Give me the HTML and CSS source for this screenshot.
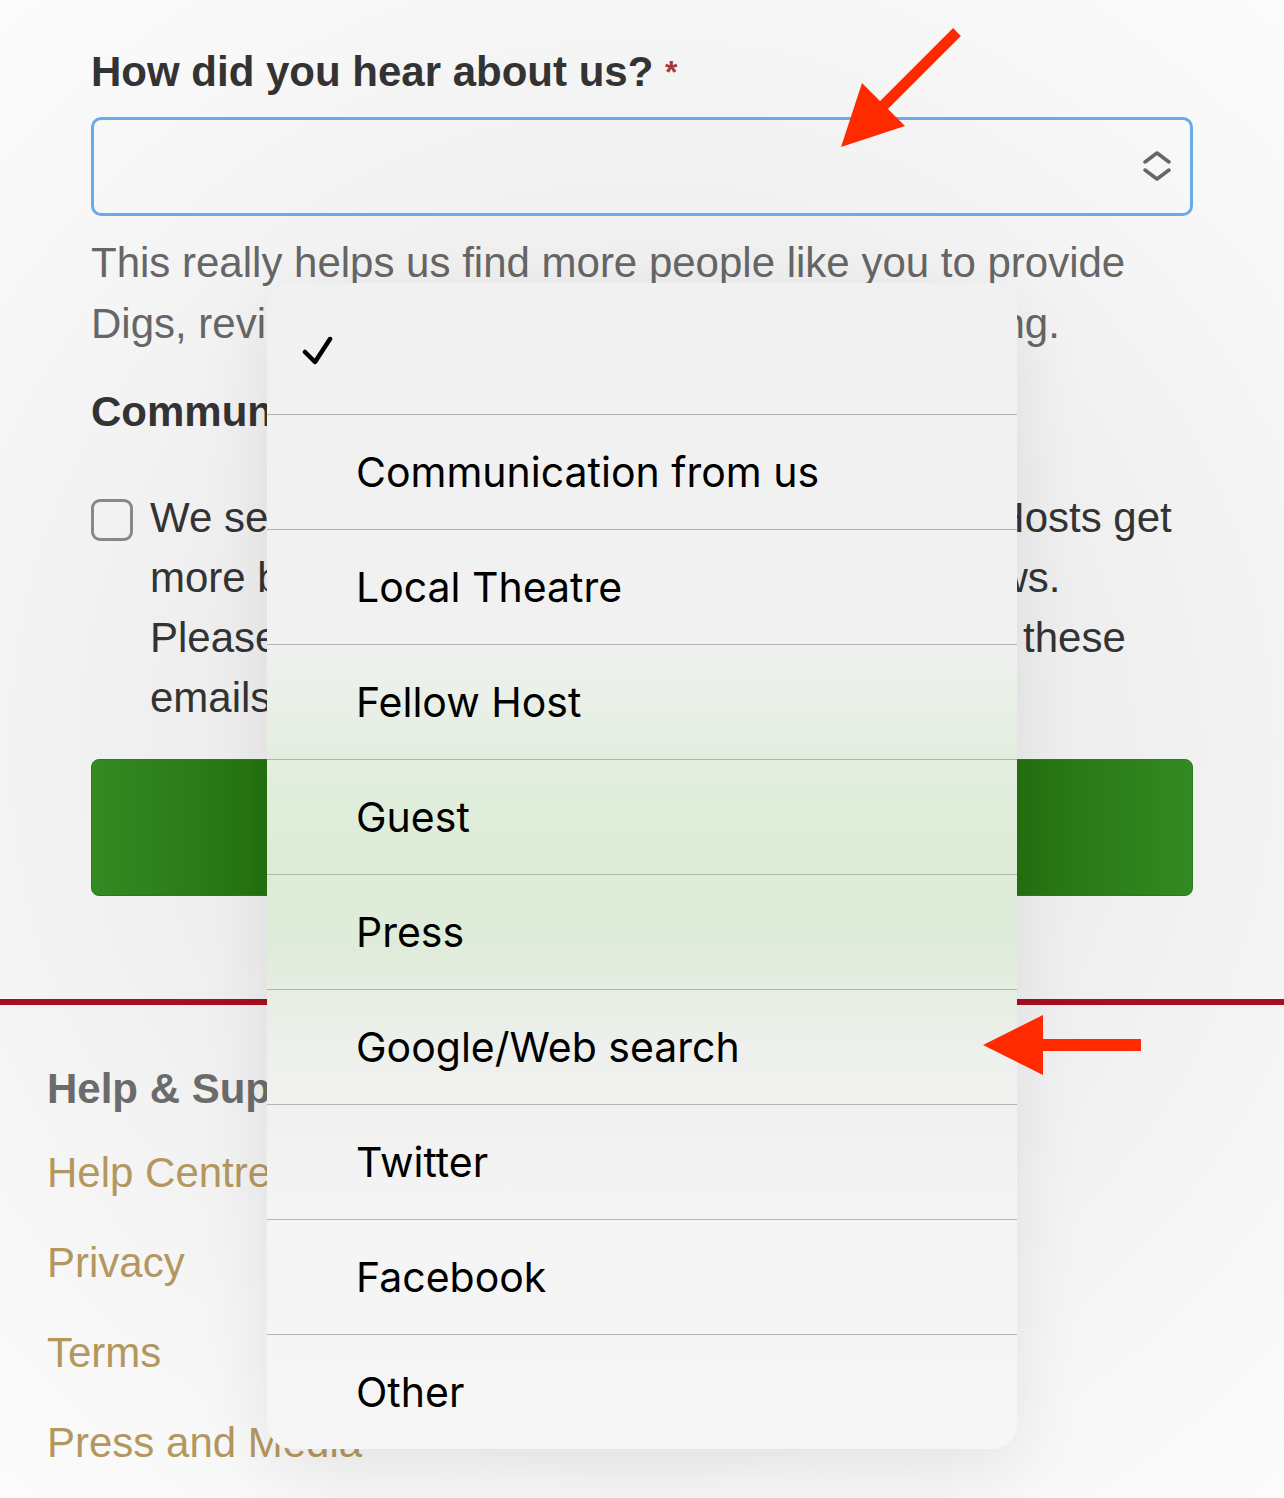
FILE: index.html
```html
<!DOCTYPE html>
<html lang="en">
<head>
  <meta charset="UTF-8" />
  <meta name="viewport" content="width=device-width, initial-scale=1.0"/>
  <title>Sign up</title>
  <link rel="stylesheet" href="styles.css">
</head>
<body>

  <main class="signup-form">
    <label class="field-label">How did you hear about us? <span class="required">*</span></label>
    <div class="select-box">
      <svg class="select-arrows" width="28" height="32" viewBox="0 0 28 32">
        <polyline points="2,11 14,2 26,11" />
        <polyline points="2,19 14,28 26,19" />
      </svg>
    </div>
    <p class="hint">This really helps us find more people like you to provide<br>Digs, reviews and support to anyone who is hosting.</p>

    <h3 class="section-title">Communication preferences</h3>
    <label class="check-row">
      <span class="check-box"></span>
      <span class="check-text">We send occasional emails with hints to help Hosts get<br>more bookings and get even more great reviews.<br>Please tick this box if you would like to receive these<br>emails.</span>
    </label>

    <button class="submit-btn">Continue</button>
  </main>

  <div class="divider"></div>

  <footer class="site-footer">
    <h4>Help &amp; Support</h4>
    <a href="#">Help Centre</a>
    <a href="#">Privacy</a>
    <a href="#">Terms</a>
    <a href="#">Press and Media</a>
  </footer>

  <!-- native picker popover -->
  <div class="picker">
    <div class="picker-row first">
      <svg class="tick" width="32" height="32" viewBox="0 0 32 32">
        <polyline points="4,19 14,29 29,6" />
      </svg>
    </div>
    <div class="picker-row">Communication from us</div>
    <div class="picker-row">Local Theatre</div>
    <div class="picker-row">Fellow Host</div>
    <div class="picker-row">Guest</div>
    <div class="picker-row">Press</div>
    <div class="picker-row">Google/Web search</div>
    <div class="picker-row">Twitter</div>
    <div class="picker-row">Facebook</div>
    <div class="picker-row last">Other</div>
  </div>

  <svg class="annotations" width="1284" height="1498" viewBox="0 0 1284 1498">
    <line x1="957" y1="32" x2="878" y2="111" />
    <polygon points="862,83 905,126 841,147" />
    <rect x="1036" y="1039" width="105" height="12" />
    <polygon points="983,1045 1043,1015 1043,1075" />
  </svg>

</body>
</html>
```

FILE: styles.css
```css
html, body {
  margin: 0;
  padding: 0;
}
body {
  position: relative;
  width: 1284px;
  height: 1498px;
  overflow: hidden;
  font-family: "Liberation Sans", Arial, sans-serif;
  color: #333;
  background: radial-gradient(ellipse 75% 65% at 50% 50%, #ebebeb 0%, #eeeeee 45%, #f7f7f7 80%, #fbfbfb 100%);
}

.signup-form {
  padding: 44px 91px 0;
}
.field-label {
  display: block;
  font-size: 42px;
  font-weight: bold;
  line-height: 56px;
  color: #333;
}
.required {
  color: #a83a34;
  font-size: 32px;
  vertical-align: top;
}
.select-box {
  position: relative;
  margin-top: 17px;
  height: 93px;
  border: 3px solid #6aabe6;
  border-radius: 10px;
  display: flex;
  align-items: center;
  justify-content: flex-end;
  padding-right: 19px;
}
.select-arrows polyline {
  fill: none;
  stroke: #666;
  stroke-width: 3.5;
  stroke-linecap: round;
  stroke-linejoin: round;
}
.hint {
  margin: 16px 0 0;
  font-size: 42px;
  line-height: 61px;
  color: #666;
}
.section-title {
  margin: 28px 0 0;
  font-size: 42px;
  line-height: 60px;
  color: #333;
}
.check-row {
  display: flex;
  gap: 17px;
  margin-top: 46px;
}
.check-box {
  flex: none;
  width: 36px;
  height: 36px;
  margin-top: 11px;
  border: 3px solid #888;
  border-radius: 9px;
}
.check-text {
  font-size: 42px;
  line-height: 60px;
  color: #333;
}
.submit-btn {
  display: block;
  width: 100%;
  height: 137px;
  margin-top: 31px;
  border: 1px solid #2a7b1c;
  border-radius: 8px;
  background: linear-gradient(to right, #348a23 0%, #24700f 17%, #24700f 83%, #338a22 100%);
  color: white;
  font-family: "Liberation Sans", Arial, sans-serif;
  font-size: 42px;
  font-weight: bold;
}

.divider {
  height: 6px;
  margin-top: 103px;
  background: #a50f1f;
}

.site-footer {
  padding: 54px 47px 0;
  display: flex;
  flex-direction: column;
}
.site-footer h4 {
  margin: 0 0 24px;
  font-size: 42px;
  line-height: 60px;
  color: #6b6b6b;
}
.site-footer a {
  font-size: 42px;
  line-height: 60px;
  margin-bottom: 30px;
  color: #b4975f;
  text-decoration: none;
}

.picker {
  position: absolute;
  left: 267px;
  top: 283px;
  width: 750px;
  border-radius: 26px;
  overflow: hidden;
  background: linear-gradient(to bottom, #f1f1f1 0%, #f1f1f1 30%, #e4eee0 40%, #dcecd6 50%, #e1ecdc 58%, #eef0ed 66%, #f4f4f4 80%, #f6f6f6 100%);
  box-shadow: 0 20px 70px rgba(0, 0, 0, 0.08);
  font-family: Inter, "Noto Sans", sans-serif;
  font-size: 41px;
  color: #000;
}
.picker-row {
  height: 114px;
  border-top: 1px solid #b4b4b4;
  padding-left: 89px;
  display: flex;
  align-items: center;
}
.picker-row.first {
  height: 131px;
  border-top: none;
  padding-left: 34px;
}
.tick polyline {
  fill: none;
  stroke: #000;
  stroke-width: 4.5;
  stroke-linecap: round;
  stroke-linejoin: round;
}

.annotations {
  position: absolute;
  left: 0;
  top: 0;
  pointer-events: none;
}
.annotations line {
  stroke: #ff2a00;
  stroke-width: 11;
}
.annotations polygon,
.annotations rect {
  fill: #ff2a00;
}
```
